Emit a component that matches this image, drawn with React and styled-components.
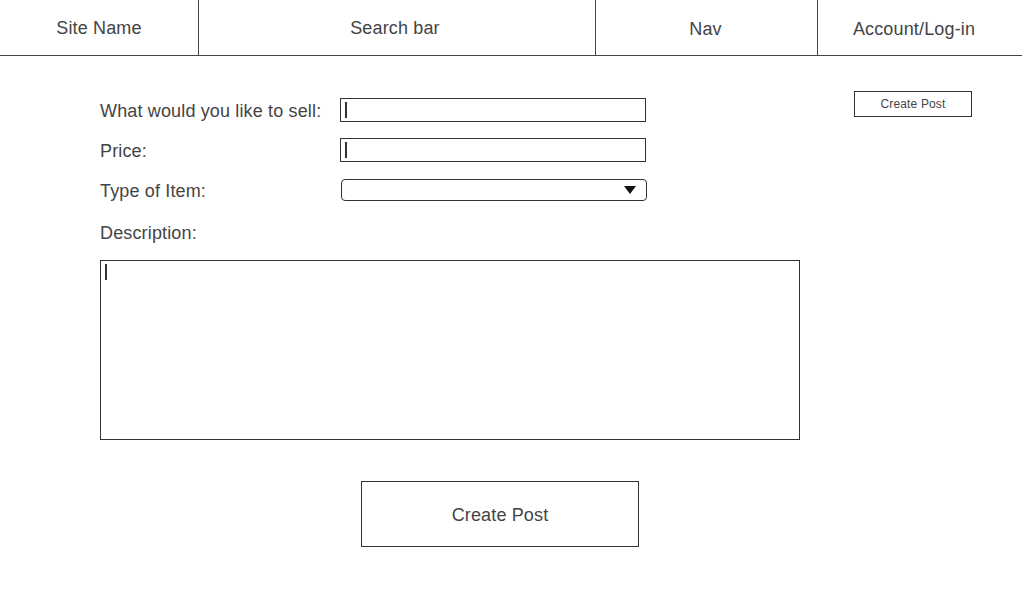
import React from "react";
import styled, { createGlobalStyle } from "styled-components";

const Global = createGlobalStyle`
  html, body { margin: 0; padding: 0; background: #fff; }
  body { font-family: "Liberation Sans", Arial, sans-serif; color: #444; letter-spacing: 0.15px; }
  * { box-sizing: border-box; }
`;

const Header = styled.header`
  display: grid;
  grid-template-columns: 199px 397px 222px 1fr;
  height: 56px;
  border-bottom: 1px solid #444;
`;

const HeaderCell = styled.div`
  display: flex;
  align-items: center;
  justify-content: center;
  font-size: 18px;
  color: #444;
  padding-top: ${(p) => (p.$low ? "4px" : "2px")};
  padding-right: ${(p) => p.$shift || 0}px;
  border-right: ${(p) => (p.$last ? "none" : "1px solid #444")};
`;

const Main = styled.main`
  display: flex;
  justify-content: space-between;
  padding: 35px 50px 0 100px;
`;

const Form = styled.div`
  width: 700px;
  display: flex;
  flex-direction: column;
`;

const Rows = styled.div`
  display: flex;
  flex-direction: column;
  gap: 16px;
  padding-top: 7px;
`;

const Row = styled.div`
  display: flex;
  align-items: center;
  height: 24px;
  margin-top: ${(p) => p.$offset || 0}px;
`;

const Label = styled.div`
  width: 240px;
  font-size: 18px;
  color: #444;
  padding-top: 2px;
`;

const TextBox = styled.div`
  width: 306px;
  height: 24px;
  border: 1px solid #333;
  display: flex;
  align-items: center;
  padding-left: 4px;
`;

const Caret = styled.span`
  display: block;
  width: 2px;
  height: 16px;
  background: #333;
`;

const Select = styled.div`
  width: 306px;
  height: 22px;
  margin-left: 1px;
  border: 1px solid #333;
  border-radius: 4px;
  display: flex;
  align-items: center;
  justify-content: flex-end;
  padding-right: 10px;
`;

const Arrow = styled.span`
  width: 0;
  height: 0;
  border-left: 6px solid transparent;
  border-right: 6px solid transparent;
  border-top: 8px solid #111;
`;

const TextArea = styled.div`
  margin-top: 16px;
  width: 700px;
  height: 180px;
  border: 1px solid #333;
  padding: 3px 0 0 4px;
`;

const BigButton = styled.div`
  margin: 41px 0 0 261px;
  width: 278px;
  height: 66px;
  border: 1px solid #333;
  display: flex;
  align-items: center;
  justify-content: center;
  padding-top: 2px;
  font-size: 18px;
  color: #444;
`;

const SmallButton = styled.div`
  width: 118px;
  height: 26px;
  border: 1px solid #333;
  display: flex;
  align-items: center;
  justify-content: center;
  font-size: 12px;
  color: #444;
  align-self: flex-start;
`;

export default function App() {
  return (
    <>
      <Global />
      <Header>
        <HeaderCell>Site Name</HeaderCell>
        <HeaderCell $shift={4}>Search bar</HeaderCell>
        <HeaderCell $low $shift={2}>Nav</HeaderCell>
        <HeaderCell $low $last $shift={12}>Account/Log-in</HeaderCell>
      </Header>
      <Main>
        <Form>
          <Rows>
            <Row>
              <Label>What would you like to sell:</Label>
              <TextBox><Caret /></TextBox>
            </Row>
            <Row>
              <Label>Price:</Label>
              <TextBox><Caret /></TextBox>
            </Row>
            <Row>
              <Label>Type of Item:</Label>
              <Select><Arrow /></Select>
            </Row>
            <Row $offset={2}>
              <Label>Description:</Label>
            </Row>
          </Rows>
          <TextArea><Caret /></TextArea>
          <BigButton>Create Post</BigButton>
        </Form>
        <SmallButton>Create Post</SmallButton>
      </Main>
    </>
  );
}
